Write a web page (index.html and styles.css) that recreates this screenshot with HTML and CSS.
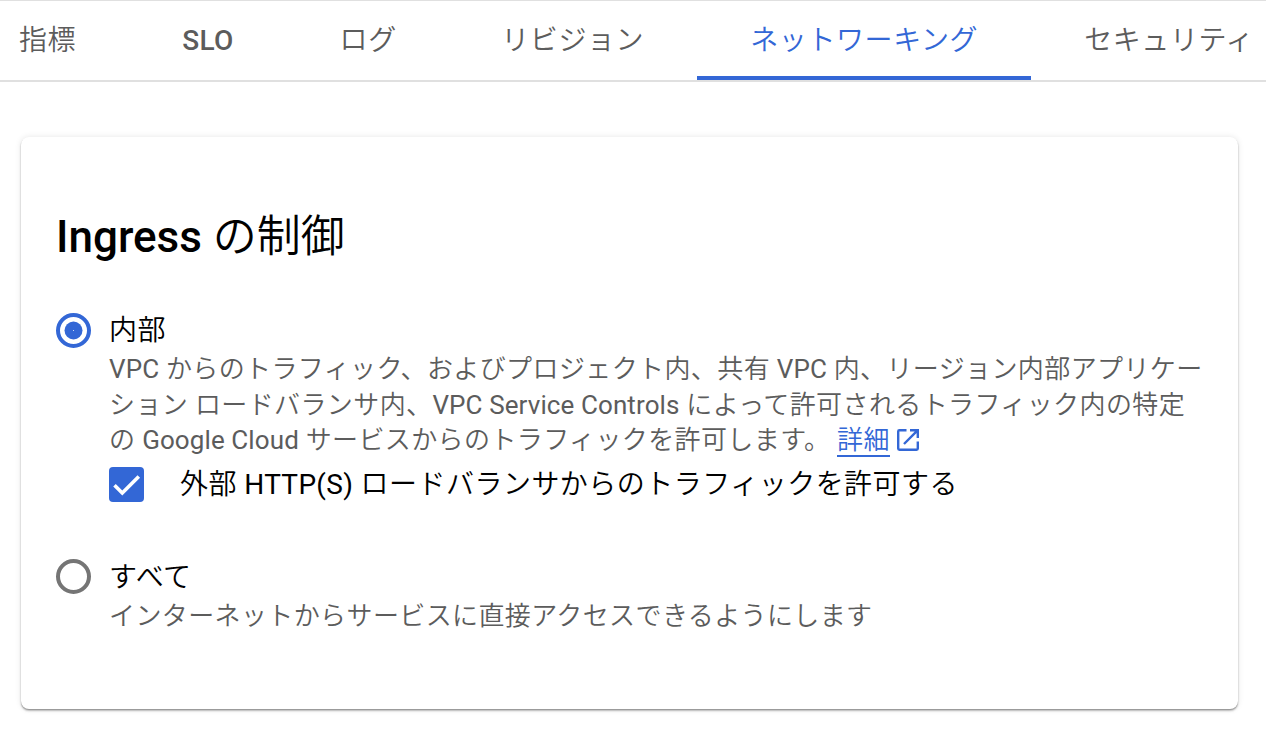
FILE: index.html
```html
<!DOCTYPE html>
<html lang="ja">
<head>
<meta charset="utf-8">
<title>ネットワーキング</title>
<link rel="stylesheet" href="styles.css">
</head>
<body>
<nav class="tabs">
  <a class="tab">指標</a>
  <a class="tab tab-latin">SLO</a>
  <a class="tab tab-log">ログ</a>
  <a class="tab">リビジョン</a>
  <a class="tab active">ネットワーキング</a>
  <a class="tab">セキュリティ</a>
</nav>
<main class="card">
  <h1 class="title"><span class="title-latin">Ingress</span> の制御</h1>
  <section class="option">
    <svg class="radio" viewBox="0 0 35 35"><circle cx="17.5" cy="17.5" r="15.5" fill="none" stroke="#3367d6" stroke-width="4"/><circle cx="17.5" cy="17.5" r="9" fill="#3367d6"/><circle cx="17.5" cy="17.5" r=".5" fill="#fff"/></svg>
    <div class="option-body">
      <div class="label">内部</div>
      <p class="desc"><span class="line"><span class="en">VPC</span> からのトラフィック、およびプロジェクト内、共有 <span class="en">VPC</span> 内、リージョン内部アプリケー</span><span class="line">ション ロードバランサ内、<span class="en">VPC Service Controls</span> によって許可されるトラフィック内の特定</span><span class="line last">の <span class="en">Google Cloud</span> サービスからのトラフィックを許可します。 <a class="link">詳細</a><svg class="ext" viewBox="0 0 24 24"><path d="M10.5 2.2H3.4Q2.2 2.2 2.2 3.4V20.6Q2.2 21.8 3.4 21.8H20.6Q21.8 21.8 21.8 20.6V13.5M14 2.2H21.8V10M21.8 2.2L8 16" fill="none" stroke="#3367d6" stroke-width="2.4"/></svg></span></p>
      <div class="check-row">
        <svg class="check" viewBox="0 0 35 35"><rect width="35" height="35" rx="4" fill="#3367d6"/><path d="M5.5 18.2L13.3 26L29.8 9.5" fill="none" stroke="#fff" stroke-width="3.6"/></svg>
        <span class="check-label">外部 <span class="check-latin">HTTP(S)</span> ロードバランサからのトラフィックを許可する</span>
      </div>
    </div>
  </section>
  <section class="option option-all">
    <svg class="radio" viewBox="0 0 35 35"><circle cx="17.5" cy="17.5" r="15.5" fill="none" stroke="#757575" stroke-width="4"/></svg>
    <div class="option-body">
      <div class="label">すべて</div>
      <p class="desc"><span class="line">インターネットからサービスに直接アクセスできるようにします</span></p>
    </div>
  </section>
</main>
</body>
</html>
```
FILE: styles.css
```css
* { box-sizing: border-box; }
body {
  margin: 0;
  height: 730px;
  overflow: hidden;
  background: #fff;
  color: #000;
  font-family: Roboto, "Noto Sans CJK JP", sans-serif;
  font-weight: 350;
}
.tabs {
  display: flex;
  height: 82px;
  overflow: hidden;
  border-top: 1px solid #e0e0e0;
  border-bottom: 2px solid #e0e0e0;
}
.tab {
  flex: none;
  height: 79px;
  padding: 0 53px;
  line-height: 80px;
  font-size: 28px;
  letter-spacing: .6px;
  color: #5c5c5c;
  white-space: nowrap;
}
.tab:first-child { padding-left: 19px; }
.tab-latin { font-weight: 500; letter-spacing: .3px; }
.tab-log { padding-right: 51.4px; }
.tab.active { color: #3367d6; border-bottom: 4px solid #3367d6; }
.card {
  width: 1217px;
  height: 572px;
  margin: 55px 0 0 21px;
  padding: 72px 35px 0;
  border-radius: 8px;
  background: #fff;
  box-shadow: 0 2px 2px rgba(0,0,0,.24), 0 1px 1px rgba(0,0,0,.2), 0 0 6px rgba(0,0,0,.1);
}
.title {
  margin: 0;
  height: 56px;
  line-height: 57px;
  font-size: 44px;
  font-weight: 350;
  white-space: nowrap;
}
.title-latin { font-weight: 500; }
.option { display: flex; margin-top: 47px; }
.option-all { margin-top: 56px; }
.radio { flex: none; width: 35px; height: 35px; margin-top: 1px; }
.option-all .radio { margin-top: 0; }
.option-body { margin-left: 18px; }
.label { height: 39px; line-height: 37px; font-size: 28px; letter-spacing: .6px; }
.desc { margin: 0; font-size: 26px; letter-spacing: .39px; color: #5c5c5c; }
.line { display: block; height: 36px; line-height: 36px; white-space: nowrap; }
.last { line-height: 34px; }
.en, .check-latin { font-weight: 400; }
.en { letter-spacing: .1px; }
.check-latin { letter-spacing: .3px; }
.link {
  display: inline-block;
  height: 34px;
  color: #3367d6;
  border-bottom: 2px solid #3367d6;
}
.ext { width: 24px; height: 24px; margin-left: 6px; vertical-align: -3px; }
.check-row { display: flex; align-items: center; height: 44px; padding-top: 6px; }
.check { flex: none; width: 35px; height: 35px; margin: 1px 36px 0 0; }
.check-label { margin-top: -5px; font-size: 28px; letter-spacing: .48px; white-space: nowrap; }
```
